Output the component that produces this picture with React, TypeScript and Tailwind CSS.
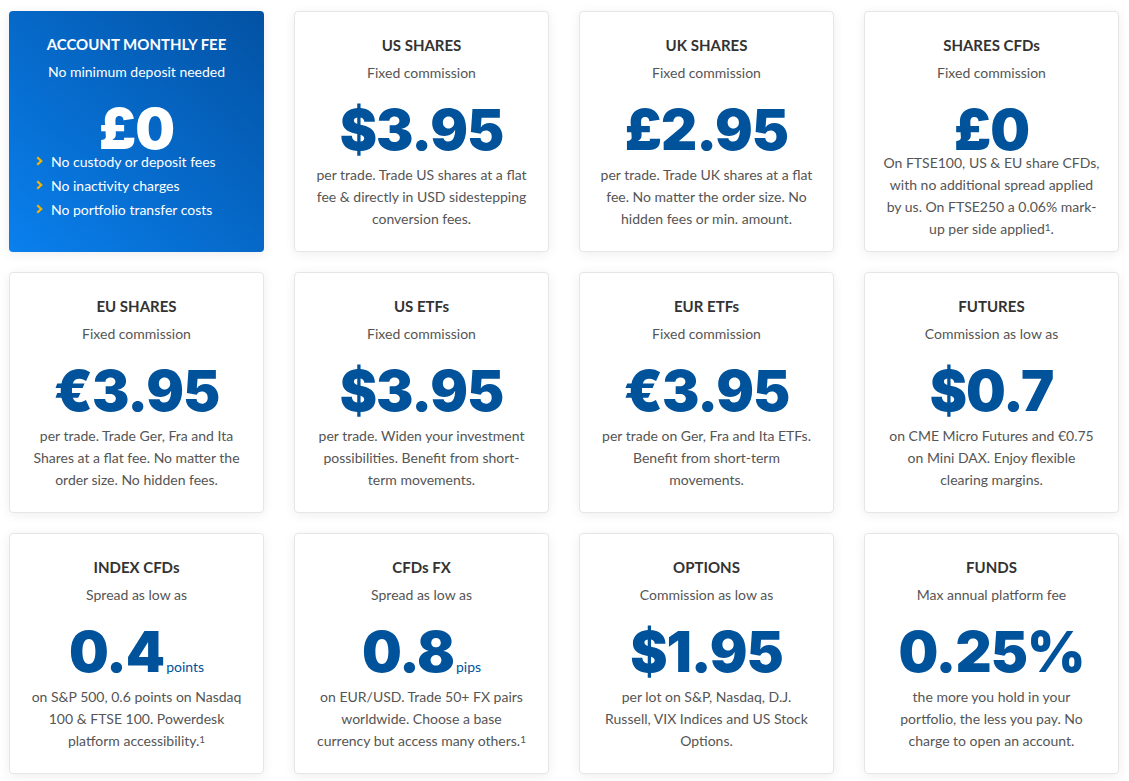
import React from "react";

type Card = {
  title: string;
  sub: string;
  price: string;
  unit?: string;
  lines: React.ReactNode[];
  tight?: boolean;
};

const Sup = () => <sup className="relative -top-[3px] text-[10px]">1</sup>;

const cards: Card[] = [
  {
    title: "US SHARES",
    sub: "Fixed commission",
    price: "$3.95",
    lines: ["per trade. Trade US shares at a flat", "fee & directly in USD sidestepping", "conversion fees."],
  },
  {
    title: "UK SHARES",
    sub: "Fixed commission",
    price: "£2.95",
    lines: ["per trade. Trade UK shares at a flat", "fee. No matter the order size. No", "hidden fees or min. amount."],
  },
  {
    title: "SHARES CFDs",
    sub: "Fixed commission",
    price: "£0",
    tight: true,
    lines: [
      "On FTSE100, US & EU share CFDs,",
      "with no additional spread applied",
      "by us. On FTSE250 a 0.06% mark-",
      <>up per side applied<Sup />.</>,
    ],
  },
  {
    title: "EU SHARES",
    sub: "Fixed commission",
    price: "€3.95",
    lines: ["per trade. Trade Ger, Fra and Ita", "Shares at a flat fee. No matter the", "order size. No hidden fees."],
  },
  {
    title: "US ETFs",
    sub: "Fixed commission",
    price: "$3.95",
    lines: ["per trade. Widen your investment", "possibilities. Benefit from short-", "term movements."],
  },
  {
    title: "EUR ETFs",
    sub: "Fixed commission",
    price: "€3.95",
    lines: ["per trade on Ger, Fra and Ita ETFs.", "Benefit from short-term", "movements."],
  },
  {
    title: "FUTURES",
    sub: "Commission as low as",
    price: "$0.7",
    lines: ["on CME Micro Futures and €0.75", "on Mini DAX. Enjoy flexible", "clearing margins."],
  },
  {
    title: "INDEX CFDs",
    sub: "Spread as low as",
    price: "0.4",
    unit: "points",
    lines: ["on S&P 500, 0.6 points on Nasdaq", "100 & FTSE 100. Powerdesk", <>platform accessibility.<Sup /></>],
  },
  {
    title: "CFDs FX",
    sub: "Spread as low as",
    price: "0.8",
    unit: "pips",
    lines: ["on EUR/USD. Trade 50+ FX pairs", "worldwide. Choose a base", <>currency but access many others.<Sup /></>],
  },
  {
    title: "OPTIONS",
    sub: "Commission as low as",
    price: "$1.95",
    lines: ["per lot on S&P, Nasdaq, D.J.", "Russell, VIX Indices and US Stock", "Options."],
  },
  {
    title: "FUNDS",
    sub: "Max annual platform fee",
    price: "0.25%",
    lines: ["the more you hold in your", "portfolio, the less you pay. No", "charge to open an account."],
  },
];

function Chevron() {
  return (
    <svg width="7" height="10" viewBox="0 0 7 10" className="shrink-0">
      <path d="M1.2 1.2 L5.2 5 L1.2 8.8" fill="none" stroke="#f7b500" strokeWidth="2.2" />
    </svg>
  );
}

function FeeCard() {
  return (
    <div className="h-[241px] rounded-[4px] bg-gradient-to-tr from-[#0a80ee] to-[#0352a3] pt-[23px] text-white shadow-[0_2px_12px_rgba(0,0,0,0.08)]">
      <div className="text-center text-[15px] font-bold leading-5">ACCOUNT MONTHLY FEE</div>
      <div className="mt-[8px] text-center text-[14px] leading-5">No minimum deposit needed</div>
      <div className="mt-[29px] h-[36px] text-center font-['Inter'] text-[56px] font-black leading-[36px] tracking-[-1px]">£0</div>
      <ul className="ml-[27px] mt-[2px] flex flex-col">
        {["No custody or deposit fees", "No inactivity charges", "No portfolio transfer costs"].map((t) => (
          <li key={t} className="flex h-6 items-center gap-[8px] text-[14px]">
            <Chevron />
            <span>{t}</span>
          </li>
        ))}
      </ul>
    </div>
  );
}

function PriceCard({ c }: { c: Card }) {
  return (
    <div className="h-[241px] rounded-[4px] border border-[#e6e6e6] bg-white pt-[23px] text-center shadow-[0_2px_12px_rgba(0,0,0,0.07)]">
      <div className="text-[15px] font-bold leading-5 text-[#333]">{c.title}</div>
      <div className="mt-[8px] text-[14px] leading-5 text-[#555]">{c.sub}</div>
      <div className="mt-[29px] flex h-[36px] items-baseline justify-center text-[#00529b]">
        <span className="font-['Inter'] text-[56px] font-black leading-[36px] tracking-[-1px]">{c.price}</span>
        {c.unit && <span className="ml-[2px] text-[14px] leading-5">{c.unit}</span>}
      </div>
      <div className={(c.tight ? "mt-[4px]" : "mt-[16px]") + " text-[14px] leading-[22px] text-[#555]"}>
        {c.lines.map((l, i) => (
          <div key={i}>{l}</div>
        ))}
      </div>
    </div>
  );
}

export default function App() {
  return (
    <div className="min-h-screen bg-white pl-[9px] pt-[11px] font-['Lato',sans-serif]">
      <div className="grid w-[1110px] grid-cols-[repeat(4,255px)] gap-x-[30px] gap-y-[20px]">
        <FeeCard />
        {cards.map((c) => (
          <PriceCard key={c.title} c={c} />
        ))}
      </div>
    </div>
  );
}
